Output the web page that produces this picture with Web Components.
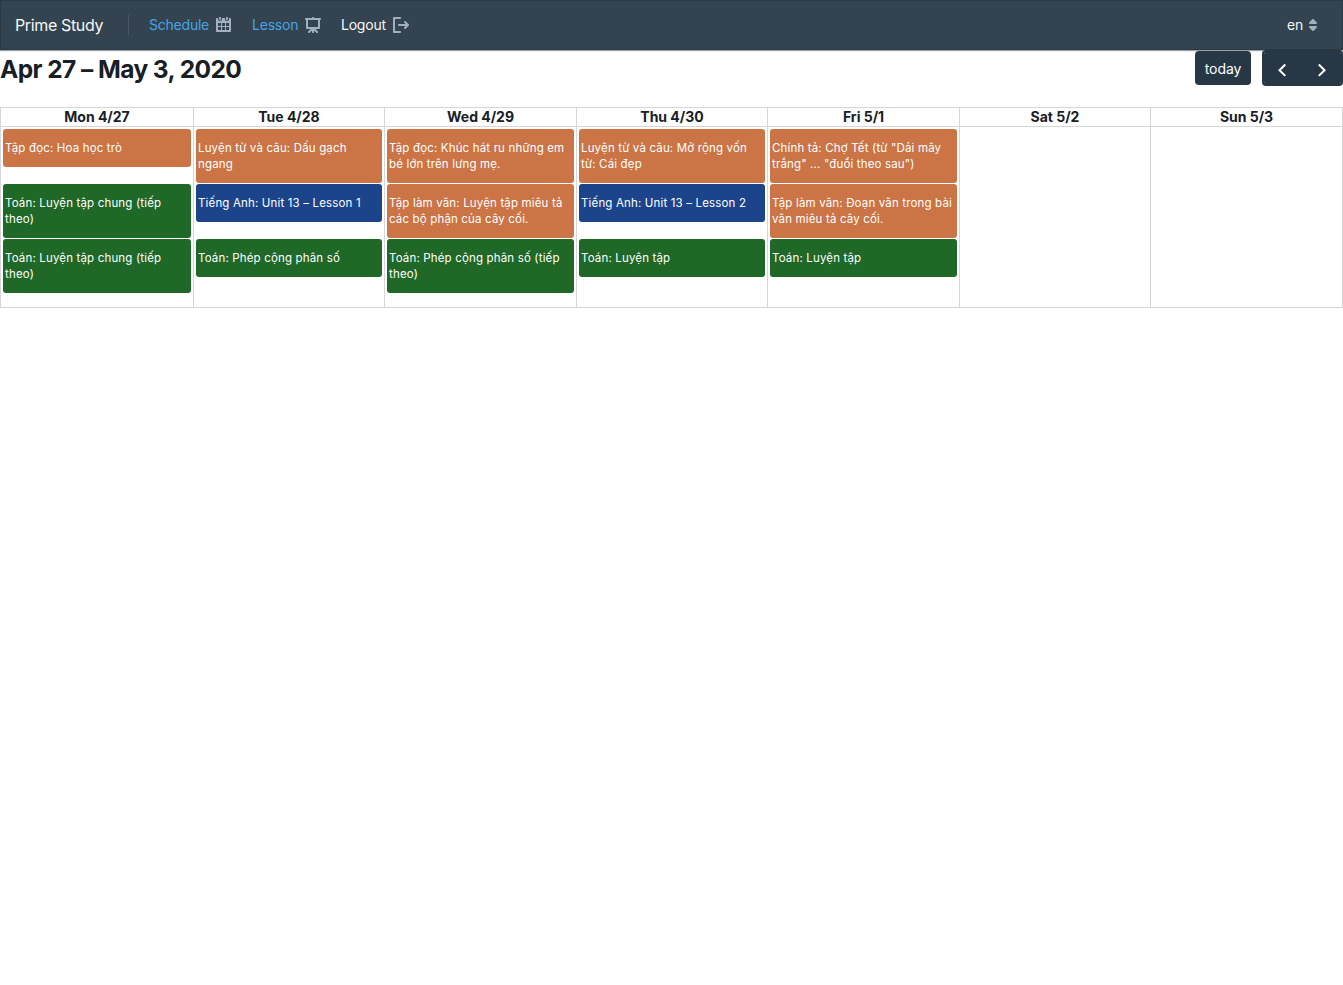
<!DOCTYPE html>
<html lang="en">
<head>
<meta charset="utf-8">
<title>Prime Study</title>
<style>
html,body{margin:0;background:#fff}
body{font-family:Inter,"Liberation Sans",sans-serif;font-size:14px;color:#182026}
</style>
</head>
<body>
<study-app></study-app>
<script>
const ICONS = {
  calendar: 'M11 3c.6 0 1-.5 1-1V1c0-.6-.4-1-1-1s-1 .4-1 1v1c0 .5.4 1 1 1zm3-2h-1v1c0 1.1-.9 2-2 2s-2-.9-2-2V1H6v1c0 1.1-.9 2-2 2s-2-.9-2-2V1H1c-.6 0-1 .5-1 1v12c0 .6.4 1 1 1h13c.6 0 1-.4 1-1V2c0-.6-.5-1-1-1zM5 13H2v-3h3v3zm0-4H2V6h3v3zm4 4H6v-3h3v3zm0-4H6V6h3v3zm4 4h-3v-3h3v3zm0-4h-3V6h3v3zM4 3c.6 0 1-.5 1-1V1c0-.6-.4-1-1-1S3 .4 3 1v1c0 .5.4 1 1 1z',
  board: 'M15 1H9c0-.55-.45-1-1-1S7 .45 7 1H1c-.55 0-1 .45-1 1s.45 1 1 1v8c0 .55.45 1 1 1h3.59L3.3 14.29A1.003 1.003 0 004 16c.28 0 .53-.11.71-.29L7 13.41V15c0 .55.45 1 1 1s1-.45 1-1v-1.59l2.29 2.29c.18.19.43.3.71.3a1.003 1.003 0 00.71-1.71L10.41 12H14c.55 0 1-.45 1-1V3c.55 0 1-.45 1-1s-.45-1-1-1zm-2 9H3V3h10v7z',
  logout: 'M7 14H2V2h5c.55 0 1-.45 1-1s-.45-1-1-1H1C.45 0 0 .45 0 1v14c0 .55.45 1 1 1h6c.55 0 1-.45 1-1s-.45-1-1-1zm8.71-6.71l-3-3a1.003 1.003 0 00-1.42 1.42L12.59 7H6c-.55 0-1 .45-1 1s.45 1 1 1h6.59l-1.29 1.29c-.19.18-.3.43-.3.71a1.003 1.003 0 001.71.71l3-3c.18-.18.29-.43.29-.71 0-.28-.11-.53-.29-.71z',
  caret: 'M5 7h6a1.003 1.003 0 00.71-1.71l-3-3C8.53 2.11 8.28 2 8 2s-.53.11-.71.29l-3 3A1.003 1.003 0 005 7zm6 2H5a1.003 1.003 0 00-.71 1.71l3 3c.18.18.43.29.71.29s.53-.11.71-.29l3-3A1.003 1.003 0 0011 9z'
};
const define = (name, html, setup) => customElements.define(name, class extends HTMLElement {
  connectedCallback() {
    if (this.shadowRoot) return;
    this.attachShadow({mode: 'open'}).innerHTML = html;
    if (setup) setup(this, this.shadowRoot);
  }
});

define('bp-icon', `<style>:host{display:block;width:16px;height:16px;flex:none;color:#a1b0bc}svg{display:block}</style>
<svg width="16" height="16" viewBox="0 0 16 16" fill="currentColor"><path/></svg>`,
  (el, root) => root.querySelector('path').setAttribute('d', ICONS[el.getAttribute('name')]));

define('nav-link', `<style>
:host{display:flex;align-items:center;gap:7px;height:30px;color:#f5f8fa;white-space:nowrap}
:host([link]){color:#43a5e6}
span{padding-bottom:2px}
</style><span><slot></slot></span><slot name="icon"></slot>`);

define('nav-bar', `<style>
:host{display:flex;align-items:center;height:50px;box-sizing:border-box;padding:0 15px;background:#33434f;
 box-shadow:inset 0 0 0 1px rgba(16,22,26,.2),0 1px 1px rgba(16,22,26,.4);position:relative}
.brand{font-size:16px;width:88px;margin-right:25px;white-space:nowrap;color:#f5f8fa;letter-spacing:-.36px}
.rule{width:1px;height:20px;background:#4b5863;margin-right:20px}
.l{letter-spacing:-.22px}
.s{width:83px;margin-right:20px}.e{width:69px;margin-right:20px}
.lang{margin-left:auto;gap:2px;margin-right:7px;letter-spacing:-.2px}
</style>
<div class="brand">Prime Study</div><div class="rule"></div>
<nav-link class="l s" link>Schedule<bp-icon slot="icon" name="calendar"></bp-icon></nav-link>
<nav-link class="l e" link>Lesson<bp-icon slot="icon" name="board"></bp-icon></nav-link>
<nav-link class="l">Logout<bp-icon slot="icon" name="logout"></bp-icon></nav-link>
<nav-link class="lang">en<bp-icon slot="icon" name="caret"></bp-icon></nav-link>`);

define('cal-button', `<style>
:host{display:flex;align-items:center;justify-content:center;box-sizing:border-box;background:#273746;color:#fff;border-radius:4px}
</style><slot></slot>`);

define('cal-toolbar', `<style>
:host{display:flex;height:36px;align-items:flex-start;position:relative}
h2{margin:0 auto 0 0;font-size:24.5px;line-height:38px;font-weight:700;letter-spacing:-.57px;white-space:nowrap}
.today{width:56px;height:34px;margin:1px 11px 0 0;padding-top:1px;letter-spacing:-.1px}
.pair{width:81px;height:36px}
.pair svg{display:block}
</style>
<h2>Apr 27 – May 3, 2020</h2>
<cal-button class="today">today</cal-button>
<cal-button class="pair"><svg width="81" height="36" viewBox="0 0 81 36" fill="none" stroke="#fff" stroke-width="2"><path d="M23.3 14.5 17.5 20.2l5.8 5.7M56.8 14.5l5.8 5.7-5.8 5.7"/><path d="M2 3.5h1M78 3.5h1M2 32.5h1M78 32.5h1" stroke="#5a6874" stroke-width="1"/></svg></cal-button>`);

define('cal-event', `<style>
:host{display:block;box-sizing:border-box;margin:0 2px;padding:11px 0 11px 2px;border-radius:3px;color:#fff;font-size:11.5px;letter-spacing:.16px;line-height:16px;align-self:start;white-space:nowrap;background:#cb7446}
:host([kind=math]){background:#206827}
:host([kind=english]){background:#1c448a}
</style><slot></slot>`);

define('cal-day', `<style>
:host{display:block;border-right:1px solid #d6d6d6;box-sizing:border-box}
header{height:18px;line-height:18px;border-bottom:1px solid #d6d6d6;text-align:center;font-weight:700;white-space:nowrap;letter-spacing:-.02px}
.events{display:grid;grid-template-rows:repeat(3,55px);height:178px;padding-top:2px}
</style><header></header><div class="events"><slot></slot></div>`,
  (el, root) => root.querySelector('header').textContent = el.getAttribute('day'));

define('study-app', `<style>
:host{display:block}
.week{display:grid;grid-template-columns:193px 191px 192px 191px 192px 191px 192px;margin-top:21px;border:1px solid #d6d6d6;border-right:0}
</style>
<nav-bar></nav-bar>
<cal-toolbar></cal-toolbar>
<div class="week">
<cal-day day="Mon 4/27"><cal-event>Tập đọc: Hoa học trò</cal-event><cal-event kind="math">Toán: Luyện tập chung (tiếp<br>theo)</cal-event><cal-event kind="math">Toán: Luyện tập chung (tiếp<br>theo)</cal-event></cal-day>
<cal-day day="Tue 4/28"><cal-event>Luyện từ và câu: Dấu gạch<br>ngang</cal-event><cal-event kind="english">Tiếng Anh: Unit 13 – Lesson 1</cal-event><cal-event kind="math">Toán: Phép cộng phân số</cal-event></cal-day>
<cal-day day="Wed 4/29"><cal-event>Tập đọc: Khúc hát ru những em<br>bé lớn trên lưng mẹ.</cal-event><cal-event>Tập làm văn: Luyện tập miêu tả<br>các bộ phận của cây cối.</cal-event><cal-event kind="math">Toán: Phép cộng phân số (tiếp<br>theo)</cal-event></cal-day>
<cal-day day="Thu 4/30"><cal-event>Luyện từ và câu: Mở rộng vốn<br>từ: Cái đẹp</cal-event><cal-event kind="english">Tiếng Anh: Unit 13 – Lesson 2</cal-event><cal-event kind="math">Toán: Luyện tập</cal-event></cal-day>
<cal-day day="Fri 5/1"><cal-event>Chính tả: Chợ Tết (từ "Dải mây<br>trắng" ... "đuổi theo sau")</cal-event><cal-event>Tập làm văn: Đoạn văn trong bài<br>văn miêu tả cây cối.</cal-event><cal-event kind="math">Toán: Luyện tập</cal-event></cal-day>
<cal-day day="Sat 5/2"></cal-day>
<cal-day day="Sun 5/3"></cal-day>
</div>`);
</script>
</body>
</html>
